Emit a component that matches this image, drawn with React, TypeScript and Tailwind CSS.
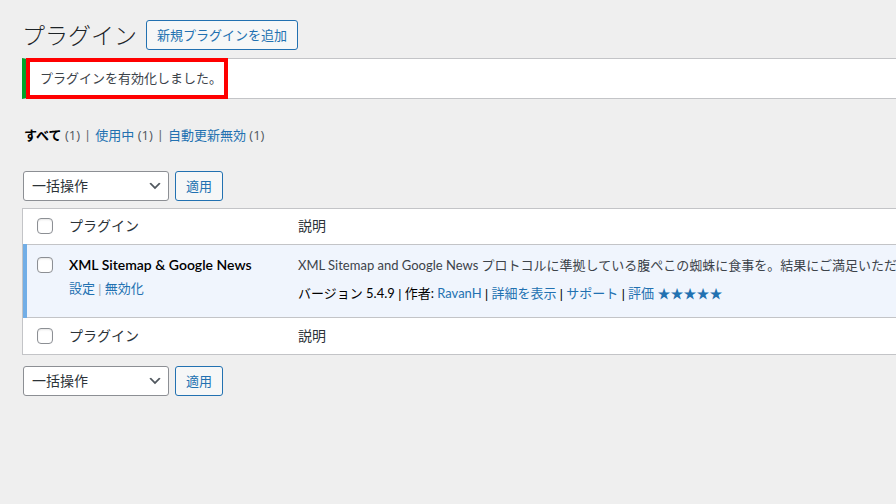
import { useState } from "react";

const PLUGIN = "xml-sitemap";

const filters = [
  { label: "すべて", count: 1 },
  { label: "使用中", count: 1 },
  { label: "自動更新無効", count: 1 },
];

function BulkActions({ label }: { label: string }) {
  return (
    <div className="flex gap-1.5 pl-px">
      <div className="relative">
        <select
          aria-label={label}
          className="block h-[30px] w-[146px] appearance-none rounded-[3px] border border-[#8c8f94] bg-white pl-2 pr-6 text-sm leading-7 text-[#2c3338]"
        >
          <option>一括操作</option>
          <option>有効化</option>
          <option>無効化</option>
          <option>削除</option>
        </select>
        <svg
          viewBox="0 0 20 20"
          className="pointer-events-none absolute right-1.5 top-[7px] h-4 w-4"
          fill="#50575e"
        >
          <path d="M5 6l5 5 5-5 2 1-7 7-7-7 2-1z" />
        </svg>
      </div>
      <button
        type="button"
        className="h-[30px] rounded-[3px] border border-[#2271b1] bg-[#f6f7f7] px-2.5 text-[13px] leading-7 text-[#2271b1]"
      >
        適用
      </button>
    </div>
  );
}

function Sep() {
  return <span className="font-['Liberation_Sans',sans-serif] text-xs leading-5"> | </span>;
}

export default function App() {
  const [selected, setSelected] = useState<string[]>([]);
  const all = selected.includes(PLUGIN);
  const toggle = () => setSelected(all ? [] : [PLUGIN]);

  const checkbox = (label: string) => (
    <input
      type="checkbox"
      aria-label={label}
      checked={all}
      onChange={toggle}
      className="block h-4 w-4 appearance-none rounded-[4px] border border-[#8c8f94] bg-white shadow-[inset_0_1px_2px_rgba(0,0,0,0.1)] checked:bg-[#2271b1]"
    />
  );

  const headings = (
    <tr className="bg-white text-left text-sm text-[#2c3338]">
      <td className="pl-3">{checkbox("すべて選択")}</td>
      <th className="font-normal">プラグイン</th>
      <th className="font-normal">説明</th>
    </tr>
  );

  return (
    <div className="min-h-screen overflow-hidden bg-[#efefef] pl-[22px] pt-5 font-['Lato','Noto_Sans_CJK_JP',sans-serif] text-[13px] leading-5 text-[#3c434a]">
      <div className="flex items-center gap-[9px]">
        <h1 className="text-[23px] font-light leading-[30px] text-[#1d2327]">プラグイン</h1>
        <a
          href="#add"
          className="h-[30px] rounded-[3px] border border-[#2271b1] bg-[#f6f7f7] px-2.5 leading-7 text-[#2271b1]"
        >
          新規プラグインを追加
        </a>
      </div>

      <div className="mt-2 flex border-y border-l-4 border-y-[#c3c4c7] border-l-[#00a32a] bg-white">
        <p className="-my-px border-4 border-[#ff0000] py-[7px] pl-2.5 pr-0.5 leading-[19px]">
          プラグインを有効化しました。
        </p>
      </div>

      <ul className="mt-[26px] flex gap-1.5 pl-0.5 font-['Open_Sans','Noto_Sans_CJK_JP',sans-serif] text-[#646970]">
        {filters.map((f, i) => (
          <li key={f.label} className="flex gap-1.5">
            {i > 0 && <Sep />}
            <a href="#filter" className={i === 0 ? "font-semibold text-black" : "text-[#2271b1]"}>
              {f.label} <span className="font-normal text-[#50575e]">({f.count})</span>
            </a>
          </li>
        ))}
      </ul>

      <div className="mt-[26px]">
        <BulkActions label="一括操作を選択" />
      </div>

      <div className="mb-[11px] mt-[7px] border-y border-l border-[#c3c4c7] bg-white">
        <table className="w-full table-fixed border-collapse">
          <colgroup>
            <col className="w-[44px]" />
            <col className="w-[229px]" />
            <col />
          </colgroup>
          <thead className="h-[35px]">{headings}</thead>
          <tbody>
            <tr className="h-[73px] border-y border-[#c3c4c7] bg-[#f0f5fd] align-top">
              <td className="border-l-4 border-l-[#72aee6] pl-2.5 pt-3">
                {checkbox("XML Sitemap & Google News を選択")}
              </td>
              <td className="pt-2.5">
                <strong className="block text-sm font-semibold text-black">XML Sitemap &amp; Google News</strong>
                <div className="mt-[3px] text-[#a7aaad]">
                  <a href="#settings" className="text-[#2271b1]">設定</a>
                  <Sep />
                  <a href="#deactivate" className="text-[#2271b1]">無効化</a>
                </div>
              </td>
              <td className="whitespace-nowrap pt-2.5">
                <p>XML Sitemap and Google News プロトコルに準拠している腹ぺこの蜘蛛に食事を。結果にご満足いただ</p>
                <div className="mt-2 text-black">
                  バージョン 5.4.9
                  <Sep />
                  作者: <a href="#author" className="text-[#2271b1]">RavanH</a>
                  <Sep />
                  <a href="#details" className="text-[#2271b1]">詳細を表示</a>
                  <Sep />
                  <a href="#support" className="text-[#2271b1]">サポート</a>
                  <Sep />
                  <a href="#rate" className="text-[#2271b1]">評価 ★★★★★</a>
                </div>
              </td>
            </tr>
          </tbody>
          <tfoot className="h-[37px]">{headings}</tfoot>
        </table>
      </div>

      <BulkActions label="一括操作を選択（下部）" />
    </div>
  );
}
